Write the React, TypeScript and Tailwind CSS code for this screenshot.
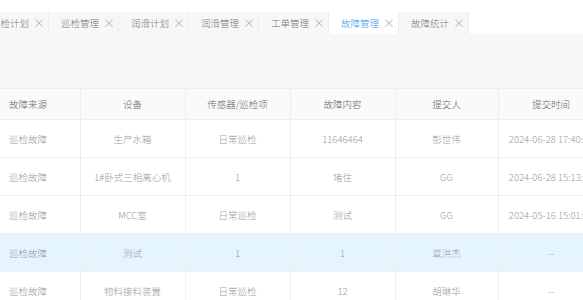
import React from 'react'

const tabs = [
  { label: '巡检计划', active: false },
  { label: '巡检管理', active: false },
  { label: '润滑计划', active: false },
  { label: '润滑管理', active: false },
  { label: '工单管理', active: false },
  { label: '故障管理', active: true },
  { label: '故障统计', active: false },
]

const columns = [
  { title: '故障来源', width: 'w-[80px]', align: 'text-left pl-[9px]' },
  { title: '设备', width: 'w-[105px]', align: 'text-center' },
  { title: '传感器/巡检项', width: 'w-[105px]', align: 'text-center' },
  { title: '故障内容', width: 'w-[105px]', align: 'text-center' },
  { title: '提交人', width: 'w-[103px]', align: 'text-center' },
  { title: '提交时间', width: 'w-[106px]', align: 'text-center' },
]

const rows = [
  ['巡检故障', '生产水箱', '日常巡检', '11646464', '彭世伟', '2024-06-28 17:40:21'],
  ['巡检故障', '1#卧式三相离心机', '1', '堵住', 'GG', '2024-06-28 15:13:09'],
  ['巡检故障', 'MCC室', '日常巡检', '测试', 'GG', '2024-05-16 15:01:44'],
  ['巡检故障', '测试', '1', '1', '覃洪杰', '--'],
  ['巡检故障', '物料接料装置', '日常巡检', '12', '胡琳华', '--'],
]

function Tab({ label, active }: { label: string; active: boolean }) {
  return (
    <div
      className={`flex h-[22px] w-[70px] shrink-0 items-center border-r border-[#ededed] pl-[12px] ${
        active ? 'bg-white text-[#3c9cf4]' : 'bg-[#f7f7f7] text-[#777777]'
      }`}
    >
      <span>{label}</span>
      <span className="ml-[4px] text-[12px] leading-none text-[#a3a3a3]">×</span>
    </div>
  )
}

export default function App() {
  return (
    <div
      className="h-[300px] w-[583px] overflow-hidden bg-[#f7f7f7] text-[9.5px] font-light"
      style={{ fontFamily: '"Noto Sans CJK SC", "Liberation Sans", sans-serif' }}
    >
      <div className="h-[12px] bg-white" />
      {/* tab strip */}
      <div className="flex h-[22px] bg-white">
        <div className="ml-[-21px] flex">
          {tabs.map(t => (
            <Tab key={t.label} label={t.label} active={t.active} />
          ))}
        </div>
      </div>
      <div className="h-[54px]" />
      <table className="w-[604px] table-fixed border-collapse">
        <thead>
          <tr className="h-[31px] bg-[#fafafa] text-[#676767]">
            {columns.map(c => (
              <th
                key={c.title}
                className={`${c.width} ${c.align} border border-[#efefef] border-l-0 font-light`}
              >
                {c.title}
              </th>
            ))}
          </tr>
        </thead>
        <tbody className="text-[#9a9a9a]">
          {rows.map((r, i) => (
            <tr key={i} className={`h-[38px] ${i === 3 ? 'bg-[#e5f5fe]' : 'bg-white'}`}>
              {r.map((cell, j) => (
                <td
                  key={j}
                  className={`${columns[j].align} whitespace-nowrap overflow-hidden border border-[#efefef] border-l-0 pt-[1px]`}
                >
                  {cell}
                </td>
              ))}
            </tr>
          ))}
        </tbody>
      </table>
    </div>
  )
}
